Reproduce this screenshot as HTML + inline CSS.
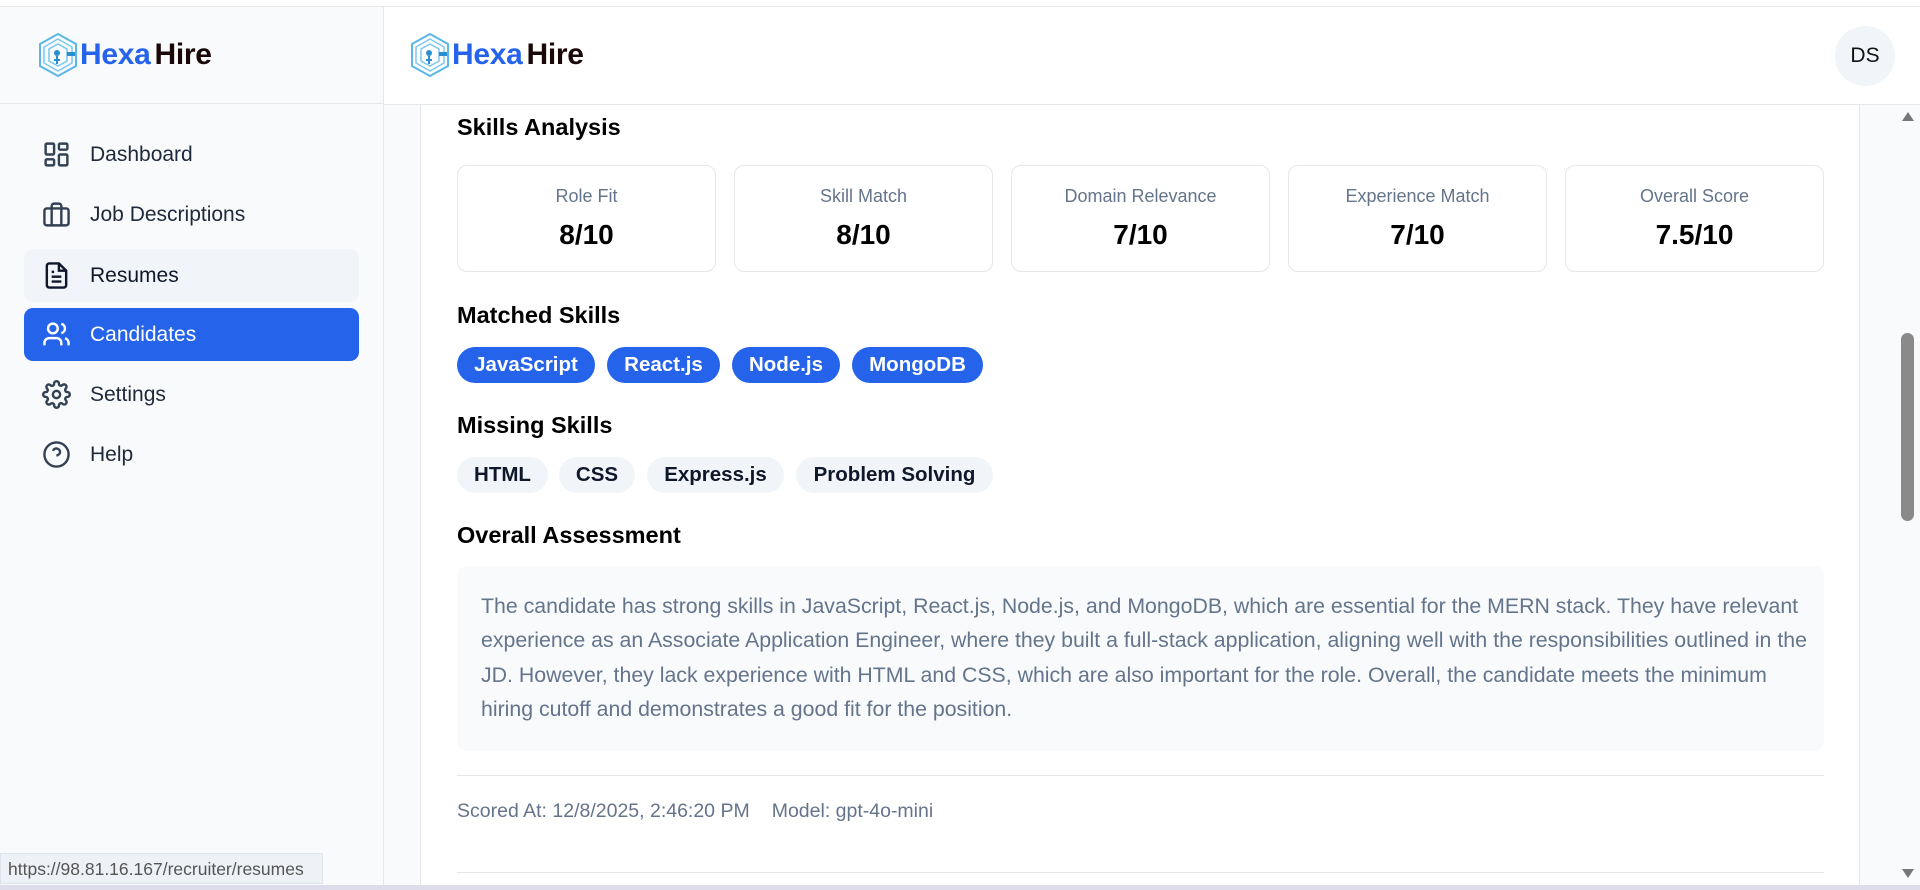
<!DOCTYPE html>
<html><head><meta charset="utf-8"><style>
*{box-sizing:border-box;margin:0;padding:0}
body{width:1920px;height:890px;overflow:hidden;background:#f8fafc;font-family:"Liberation Sans",sans-serif;position:relative;color:#0f172a}
.topline{position:absolute;left:0;top:0;width:1920px;height:7px;background:#fff;border-bottom:1px solid #e5e7eb}
.side{position:absolute;left:0;top:7px;width:384px;height:883px;background:#f8fafc;border-right:1px solid #e5e7eb}
.side .hdr{height:97px;border-bottom:1px solid #e5e7eb;position:relative}
.logo{position:absolute;display:flex;align-items:center}
.logo span{font-weight:bold;font-size:30px;letter-spacing:-0.3px}
.nav{position:absolute;left:24px;width:335px;height:53px;border-radius:9px;display:flex;align-items:center;font-size:21px;color:#1e293b}
.nav svg{position:absolute;left:18px;top:12px}
.nav b{font-weight:normal;position:absolute;left:66px}
.main-h{position:absolute;left:384px;top:7px;width:1536px;height:98px;background:#fff;border-bottom:1px solid #e5e7eb}
.av{position:absolute;width:60px;height:60px;border-radius:50%;background:#f1f5f9;font-size:21px;display:flex;align-items:center;justify-content:center;color:#111}
.panel{position:absolute;left:420px;top:105px;width:1440px;height:780px;background:#fff;border-left:1px solid #e5e7eb;border-right:1px solid #e5e7eb}
.h{position:absolute;left:457px;font-size:23.5px;font-weight:bold;color:#000}
.card{position:absolute;top:165px;width:259px;height:107px;border:1px solid #e5e7eb;border-radius:10px;text-align:center}
.card .l{margin-top:20px;font-size:18px;color:#64748b}
.card .v{margin-top:12px;font-size:28px;font-weight:bold;color:#000}
.pill{position:absolute;height:36px;border-radius:18px;font-size:20.5px;font-weight:bold;display:flex;align-items:center;justify-content:center;white-space:nowrap}
.pb{background:#2563eb;color:#fff}
.pg{background:#f1f5f9;color:#0f172a}
.box{position:absolute;left:457px;top:566px;width:1367px;height:185px;background:#f8fafc;border-radius:10px;padding:23px 14px 23px 24px;font-size:21.3px;line-height:34.3px;color:#64748b}
.hr{position:absolute;left:457px;width:1367px;height:1px;background:#e5e7eb}
.meta{position:absolute;left:457px;top:800px;font-size:19.5px;color:#64748b}
.sb{position:absolute;left:1896px;top:105px;width:24px;height:780px;background:#f8fafc}
.thumb{position:absolute;left:1901px;top:333px;width:13px;height:188px;background:#8a8a8a;border-radius:7px}
.bottom{position:absolute;left:0;top:885px;width:1920px;height:5px;background:#dcdcea}
.status{position:absolute;left:0;top:853px;width:323px;height:31px;background:#eef1f6;border:1px solid #dde3ea;font-size:17.5px;color:#555;padding:5px 7px;white-space:nowrap;overflow:hidden}
</style></head><body>
<div class="topline"></div>
<div class="side"><div class="hdr">
<div class="logo" style="left:37px;top:25px">
<svg width="42" height="46" viewBox="0 0 42 46"><polygon points="21,2 39,12 39,34 21,44 3,34 3,12" fill="none" stroke="#5bb8e6" stroke-width="2"/><polygon points="21,7 35,15 35,31 21,39 7,31 7,15" fill="none" stroke="#7cc8ee" stroke-width="1.5"/><polygon points="21,12 30,17 30,29 21,34 12,29 12,17" fill="none" stroke="#7cc8ee" stroke-width="1.5"/><circle cx="20" cy="21" r="3" fill="#2a8fd0"/><path d="M20 24v8M17 28h6" stroke="#2a8fd0" stroke-width="2"/><rect x="30" y="20" width="8" height="4" fill="#2a8fd0"/></svg>
<span style="color:#2563eb;margin-left:1px">Hexa</span><span style="color:#1a0808;margin-left:4px">Hire</span></div>
</div></div>
<div class="nav" style="top:128px"><svg width="29" height="29" viewBox="0 0 24 24" fill="none" stroke="#334155" stroke-width="2"><rect x="3" y="3" width="7" height="9" rx="1"/><rect x="14" y="3" width="7" height="5" rx="1"/><rect x="14" y="12" width="7" height="9" rx="1"/><rect x="3" y="16" width="7" height="5" rx="1"/></svg><b>Dashboard</b></div>
<div class="nav" style="top:188px"><svg width="29" height="29" viewBox="0 0 24 24" fill="none" stroke="#334155" stroke-width="2"><rect x="2" y="7" width="20" height="14" rx="2"/><path d="M16 21V5a2 2 0 0 0-2-2h-4a2 2 0 0 0-2 2v16"/></svg><b>Job Descriptions</b></div>
<div class="nav" style="top:249px;background:#f1f5f9"><svg width="29" height="29" viewBox="0 0 24 24" fill="none" stroke="#0f172a" stroke-width="2"><path d="M14 2H6a2 2 0 0 0-2 2v16a2 2 0 0 0 2 2h12a2 2 0 0 0 2-2V8z"/><path d="M14 2v6h6M16 13H8M16 17H8M10 9H8"/></svg><b style="color:#0f172a">Resumes</b></div>
<div class="nav" style="top:308px;background:#2563eb"><svg width="29" height="29" viewBox="0 0 24 24" fill="none" stroke="#fff" stroke-width="2"><path d="M16 21v-2a4 4 0 0 0-4-4H6a4 4 0 0 0-4 4v2"/><circle cx="9" cy="7" r="4"/><path d="M22 21v-2a4 4 0 0 0-3-3.87M16 3.13a4 4 0 0 1 0 7.75"/></svg><b style="color:#fff">Candidates</b></div>
<div class="nav" style="top:368px"><svg width="29" height="29" viewBox="0 0 24 24" fill="none" stroke="#334155" stroke-width="2"><circle cx="12" cy="12" r="3"/><path d="M19.4 15a1.65 1.65 0 0 0 .33 1.82l.06.06a2 2 0 1 1-2.83 2.83l-.06-.06a1.65 1.65 0 0 0-1.82-.33 1.65 1.65 0 0 0-1 1.51V21a2 2 0 1 1-4 0v-.09A1.65 1.65 0 0 0 9 19.4a1.65 1.65 0 0 0-1.82.33l-.06.06a2 2 0 1 1-2.83-2.83l.06-.06A1.65 1.65 0 0 0 4.68 15a1.65 1.65 0 0 0-1.51-1H3a2 2 0 1 1 0-4h.09A1.65 1.65 0 0 0 4.6 9a1.65 1.65 0 0 0-.33-1.82l-.06-.06a2 2 0 1 1 2.83-2.83l.06.06A1.65 1.65 0 0 0 9 4.68 1.65 1.65 0 0 0 10 3.17V3a2 2 0 1 1 4 0v.09a1.65 1.65 0 0 0 1 1.51 1.65 1.65 0 0 0 1.82-.33l.06-.06a2 2 0 1 1 2.83 2.83l-.06.06A1.65 1.65 0 0 0 19.4 9a1.65 1.65 0 0 0 1.51 1H21a2 2 0 1 1 0 4h-.09a1.65 1.65 0 0 0-1.51 1z"/></svg><b>Settings</b></div>
<div class="nav" style="top:428px"><svg width="29" height="29" viewBox="0 0 24 24" fill="none" stroke="#334155" stroke-width="2"><circle cx="12" cy="12" r="10"/><path d="M9.09 9a3 3 0 0 1 5.83 1c0 2-3 3-3 3M12 17h.01"/></svg><b>Help</b></div>

<div class="main-h">
<div class="logo" style="left:25px;top:25px">
<svg width="42" height="46" viewBox="0 0 42 46"><polygon points="21,2 39,12 39,34 21,44 3,34 3,12" fill="none" stroke="#5bb8e6" stroke-width="2"/><polygon points="21,7 35,15 35,31 21,39 7,31 7,15" fill="none" stroke="#7cc8ee" stroke-width="1.5"/><polygon points="21,12 30,17 30,29 21,34 12,29 12,17" fill="none" stroke="#7cc8ee" stroke-width="1.5"/><circle cx="20" cy="21" r="3" fill="#2a8fd0"/><path d="M20 24v8M17 28h6" stroke="#2a8fd0" stroke-width="2"/><rect x="30" y="20" width="8" height="4" fill="#2a8fd0"/></svg>
<span style="color:#2563eb;margin-left:1px">Hexa</span><span style="color:#1a0808;margin-left:4px">Hire</span></div>
<div class="av" style="left:1451px;top:19px">DS</div>
</div>

<div class="panel"></div>
<div class="h" style="top:114px">Skills Analysis</div>
<div class="card" style="left:457px"><div class="l">Role Fit</div><div class="v">8/10</div></div>
<div class="card" style="left:734px"><div class="l">Skill Match</div><div class="v">8/10</div></div>
<div class="card" style="left:1011px"><div class="l">Domain Relevance</div><div class="v">7/10</div></div>
<div class="card" style="left:1288px"><div class="l">Experience Match</div><div class="v">7/10</div></div>
<div class="card" style="left:1565px"><div class="l">Overall Score</div><div class="v">7.5/10</div></div>

<div class="h" style="top:302px">Matched Skills</div>
<div class="pill pb" style="left:457px;top:347px;width:138px">JavaScript</div>
<div class="pill pb" style="left:607px;top:347px;width:113px">React.js</div>
<div class="pill pb" style="left:732px;top:347px;width:108px">Node.js</div>
<div class="pill pb" style="left:852px;top:347px;width:131px">MongoDB</div>

<div class="h" style="top:412px">Missing Skills</div>
<div class="pill pg" style="left:457px;top:457px;width:91px">HTML</div>
<div class="pill pg" style="left:559px;top:457px;width:76px">CSS</div>
<div class="pill pg" style="left:647px;top:457px;width:137px">Express.js</div>
<div class="pill pg" style="left:796px;top:457px;width:197px">Problem Solving</div>

<div class="h" style="top:522px">Overall Assessment</div>
<div class="box">The candidate has strong skills in JavaScript, React.js, Node.js, and MongoDB, which are essential for the MERN stack. They have relevant experience as an Associate Application Engineer, where they built a full-stack application, aligning well with the responsibilities outlined in the JD. However, they lack experience with HTML and CSS, which are also important for the role. Overall, the candidate meets the minimum hiring cutoff and demonstrates a good fit for the position.</div>
<div class="hr" style="top:775px"></div>
<div class="meta">Scored At: 12/8/2025, 2:46:20 PM<span style="margin-left:22px">Model: gpt-4o-mini</span></div>
<div class="hr" style="top:872px"></div>

<div class="sb"></div>
<svg style="position:absolute;left:1901px;top:111px" width="14" height="12"><polygon points="7,1 13,10 1,10" fill="#777"/></svg>
<div class="thumb"></div>
<svg style="position:absolute;left:1901px;top:867px" width="14" height="12"><polygon points="1,2 13,2 7,11" fill="#777"/></svg>
<div class="status">https://98.81.16.167/recruiter/resumes</div>
<div class="bottom"></div>
</body></html>
